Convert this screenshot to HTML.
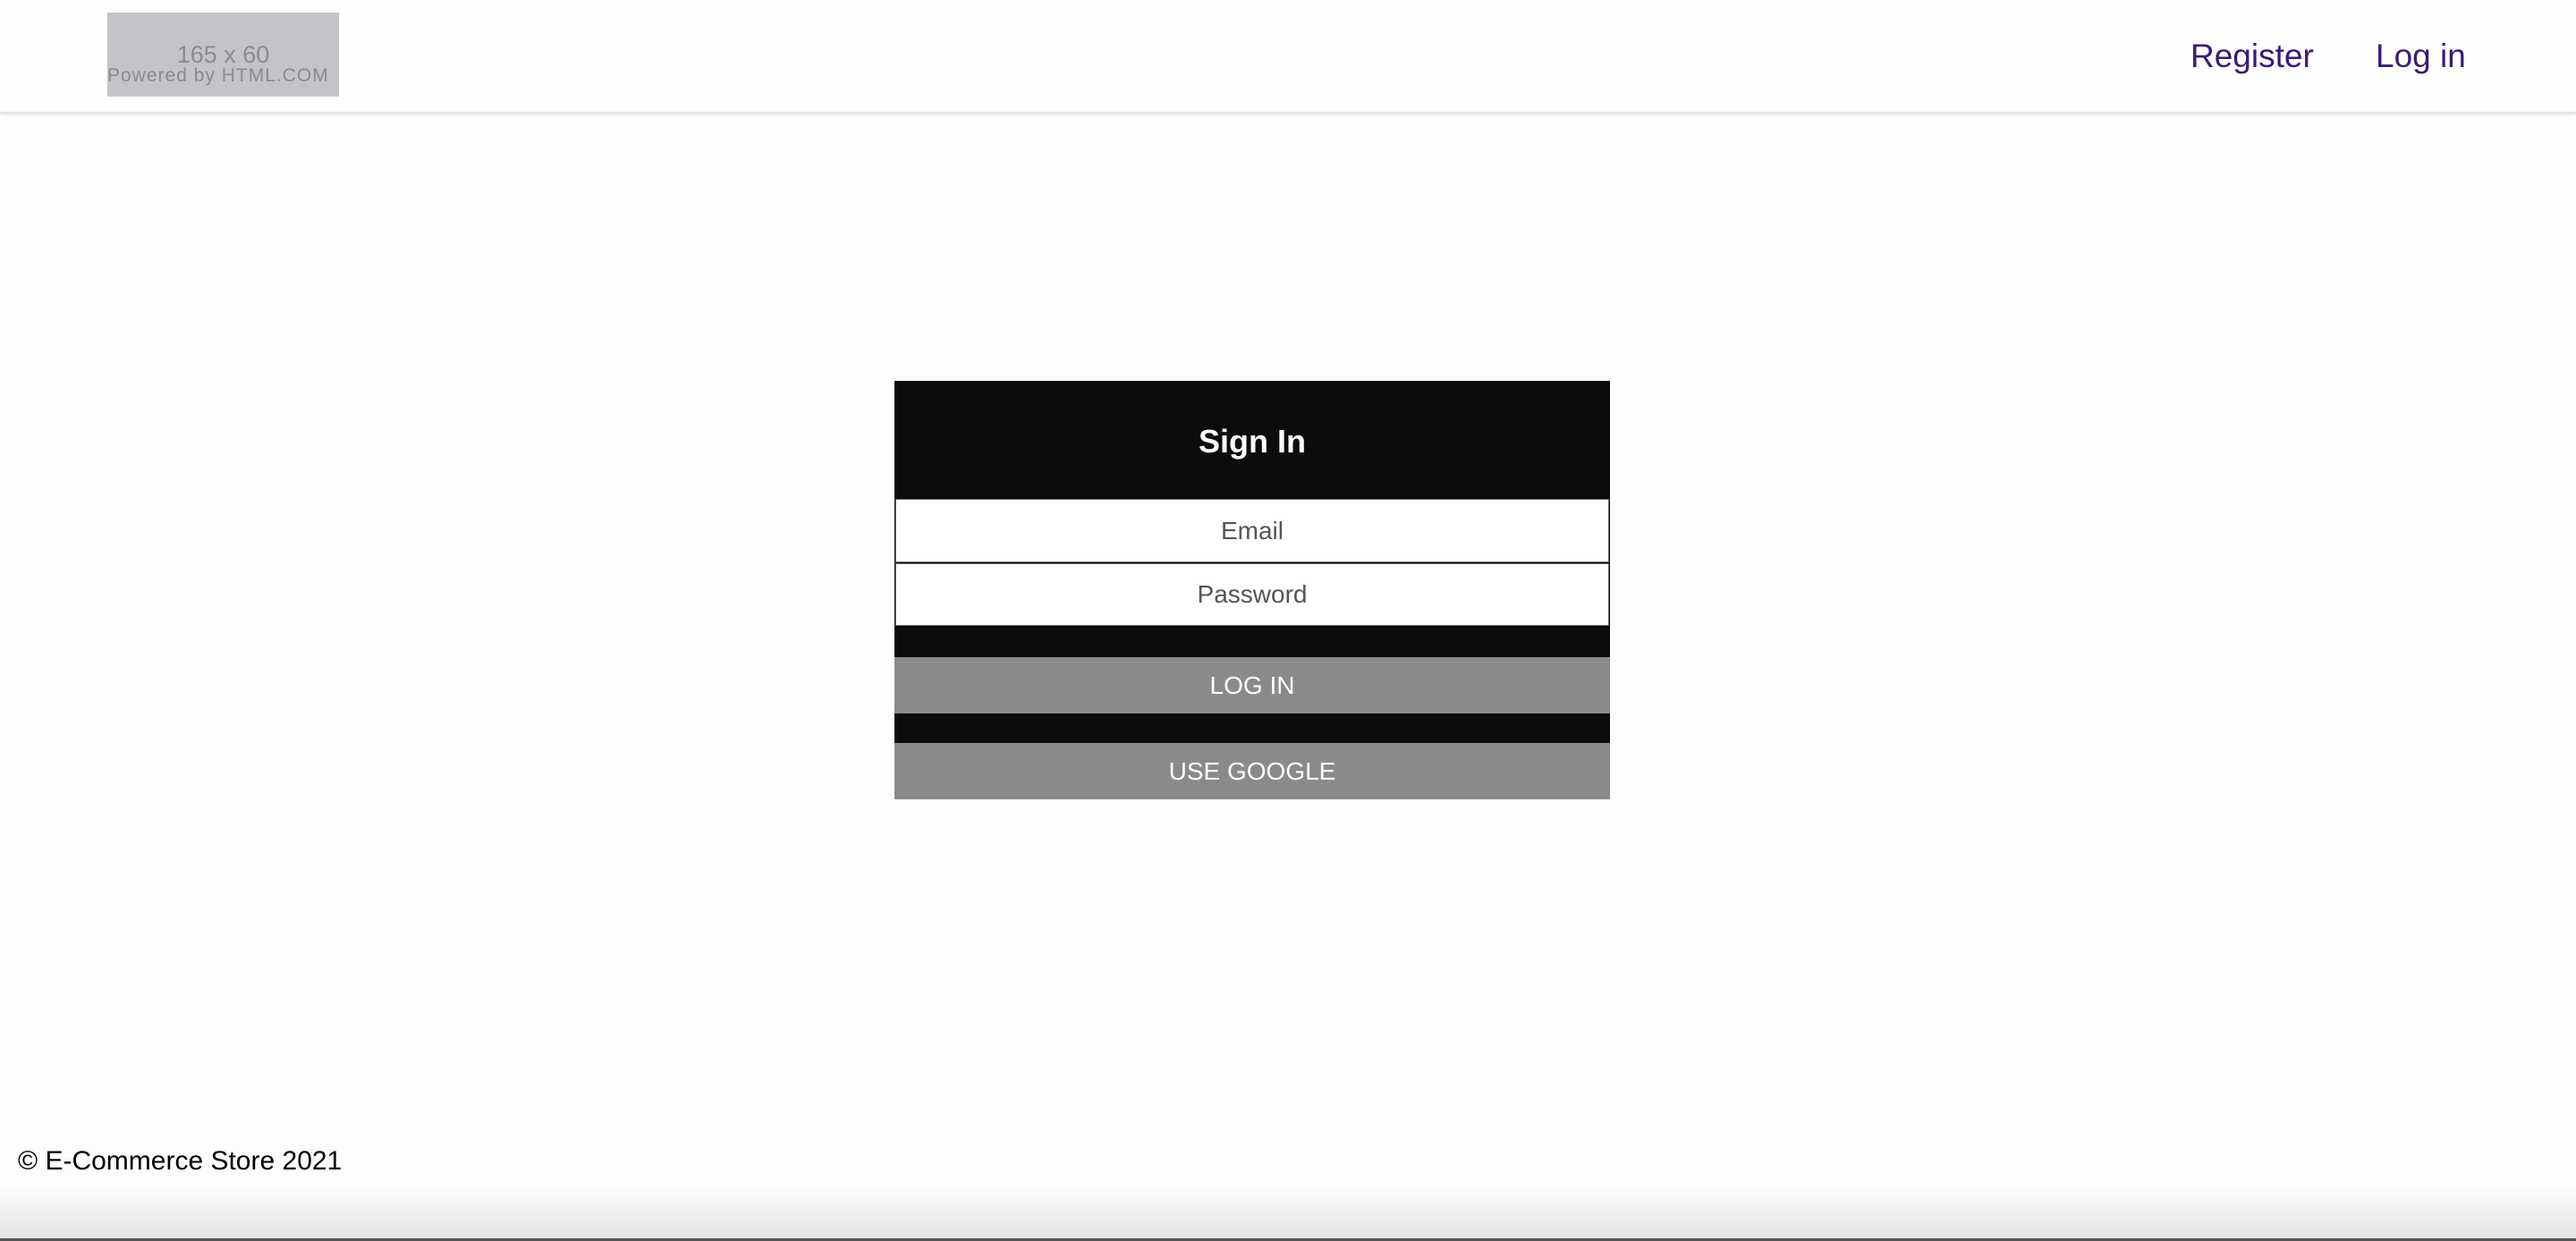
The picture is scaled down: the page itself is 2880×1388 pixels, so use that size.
<!DOCTYPE html>
<html><head><meta charset="utf-8"><style>
html,body{margin:0;padding:0;}
body{width:2880px;height:1388px;position:relative;background:#fdfdfd;overflow:hidden;font-family:"Liberation Sans",sans-serif;}
.hdr{position:absolute;left:0;top:0;width:2880px;height:125px;background:#fefefe;box-shadow:0 2px 4px rgba(0,0,0,0.12);border-bottom:1px solid #e4e4e4;}
.logo{position:absolute;left:120px;top:14px;width:259px;height:94px;background:#c4c4c8;color:#8a8a8a;}
.logo .a{position:absolute;left:0;right:0;top:32px;text-align:center;font-size:27px;}
.logo .b{position:absolute;left:0;top:59px;font-size:21px;letter-spacing:1px;}
.nav{position:absolute;top:42px;font-family:"Liberation Sans",sans-serif;font-size:37px;color:#3b1a7a;}
.card{position:absolute;left:1000px;top:426px;width:800px;height:468px;background:#0c0c0e;}
.title{position:absolute;left:0;right:0;top:0;height:222px;line-height:136px;text-align:center;color:#fff;font-family:"Liberation Sans",sans-serif;font-weight:bold;font-size:36px;}
.inp{position:absolute;left:1px;width:796px;background:#fff;border:1px solid #6a6a6a;color:#555;font-size:28px;text-align:center;}
.btn{position:absolute;left:0;width:800px;height:63px;line-height:63px;background:#8a8a8a;color:#fff;font-size:28px;text-align:center;}
.foot{position:absolute;left:20px;top:1282px;font-family:"Liberation Sans",sans-serif;font-size:30px;color:#000;}
.shade{position:absolute;left:0;bottom:0;width:2880px;height:60px;background:linear-gradient(#fdfdfd00,#e2e2e2);}
.shade2{position:absolute;left:0;bottom:0;width:2880px;height:3px;background:#555;}
</style></head><body>
<div class="hdr">
 <div class="logo"><div class="a">165 x 60</div><div class="b">Powered by HTML.COM</div></div>
 <div class="nav" style="left:2449px">Register</div>
 <div class="nav" style="left:2656px">Log in</div>
</div>
<div class="card">
 <div class="title">Sign In</div>
 <div class="inp" style="top:132px;height:69px;line-height:69px;">Email</div>
 <div class="inp" style="top:204px;height:68px;line-height:68px;">Password</div>
 <div class="btn" style="top:309px;">LOG IN</div>
 <div class="btn" style="top:405px;">USE GOOGLE</div>
</div>
<div class="foot">© E-Commerce Store 2021</div>
<div class="shade"></div>
<div class="shade2"></div>
</body></html>
